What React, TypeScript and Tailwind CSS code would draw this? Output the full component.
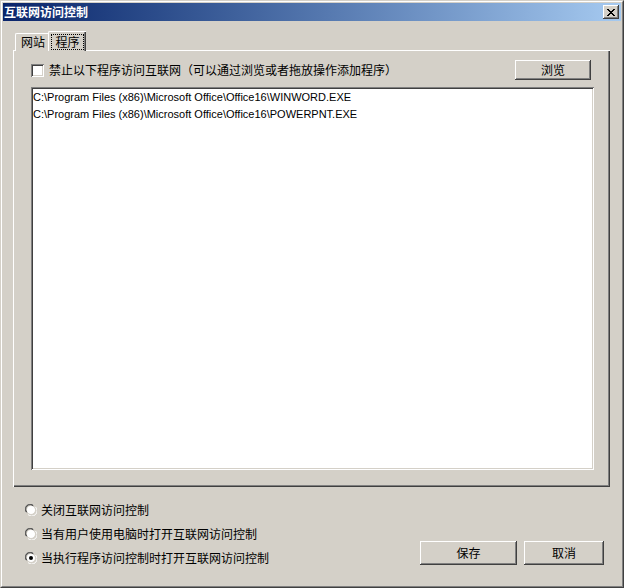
const raised =
  "shadow-[inset_-1px_-1px_#404040,inset_1px_1px_#ffffff,inset_-2px_-2px_#808080]";
const cjk = "font-['SimSun','Noto_Sans_CJK_SC',sans-serif]";

const programs = [
  "C:\\Program Files (x86)\\Microsoft Office\\Office16\\WINWORD.EXE",
  "C:\\Program Files (x86)\\Microsoft Office\\Office16\\POWERPNT.EXE",
];

const modes = [
  "关闭互联网访问控制",
  "当有用户使用电脑时打开互联网访问控制",
  "当执行程序访问控制时打开互联网访问控制",
];

function Radio({ checked }: { checked: boolean }) {
  return (
    <svg width="12" height="12" viewBox="0 0 12 12" className="shrink-0">
      <path d="M1 8 A5 5 0 0 1 8 1" stroke="#808080" fill="none" strokeWidth="1" />
      <path d="M2 8.5 A4.2 4.2 0 0 1 8.5 2" stroke="#404040" fill="none" strokeWidth="1" />
      <circle cx="6" cy="6" r="4" fill="#ffffff" />
      <path d="M3 10.5 A5 5 0 0 0 10.5 3" stroke="#ffffff" fill="none" strokeWidth="1" />
      <path d="M3.2 9.4 A4.2 4.2 0 0 0 9.4 3.2" stroke="#d4d0c8" fill="none" strokeWidth="1" />
      {checked && <circle cx="6" cy="6" r="2" fill="#000000" />}
    </svg>
  );
}

function Button({ label, width }: { label: string; width: string }) {
  return (
    <button
      className={`${width} h-[24px] bg-[#d4d0c8] ${raised} text-[12px] text-black ${cjk} flex items-center justify-center`}
    >
      {label}
    </button>
  );
}

export default function App() {
  return (
    <div className="w-[624px] h-[588px] bg-[#d4d0c8] border border-t-[#d4d0c8] border-l-[#d4d0c8] border-r-[#404040] border-b-[#404040]">
      <div className="h-full border border-t-white border-l-white border-r-[#808080] border-b-[#808080] p-px flex flex-col">
        {/* title bar */}
        <div className="h-[18px] bg-linear-to-r from-[#0a246a] to-[#a6caf0] flex items-center justify-between pl-px pr-[2px]">
          <span className={`text-white font-bold text-[12px] leading-none ${cjk}`}>
            互联网访问控制
          </span>
          <div className={`w-[16px] h-[14px] bg-[#d4d0c8] ${raised} flex items-center justify-center`}>
            <svg width="8" height="7" viewBox="0 0 8 7">
              <path
                d="M0 0h2v1h1v1h2V1h1V0h2v1H7v1H6v1H5v1h1v1h1v1h1v1H6V6H5V5H3v1H2v1H0V6h1V5h1V4h1V3H2V2H1V1H0z"
                fill="#000"
              />
            </svg>
          </div>
        </div>

        {/* tabs + panel */}
        <div className="pl-[10px] pr-[11px] pt-[10px]">
          <div className="flex items-end h-[19px] pl-[2px] relative z-10">
            <div className={`w-[35px] h-[18px] pb-px bg-[#d4d0c8] border-t border-l border-white rounded-tl-[2px] shadow-[inset_-1px_0_#808080] flex items-center justify-center text-[12px] text-black ${cjk} mb-[-1px]`}>
              网站
            </div>
            <div className={`w-[38px] h-[20px] -ml-[2px] bg-[#d4d0c8] border-t border-l border-white rounded-tl-[2px] shadow-[inset_-1px_0_#404040,inset_-2px_0_#808080] flex items-center justify-center text-[12px] text-black ${cjk} mb-[-1px]`}>
              <span className="outline-1 outline-dotted outline-black px-[3px] leading-[14px]">程序</span>
            </div>
          </div>
          <div className="h-[437px] bg-[#d4d0c8] shadow-[inset_1px_1px_#ffffff,inset_-1px_-1px_#404040,inset_-2px_-2px_#808080] pl-[18px] pr-[16px] pt-[10px] flex flex-col">
            <div className="h-[20px] flex items-center justify-between pr-[3px]">
              <div className="flex items-center gap-[5px]">
                <div className="w-[13px] h-[13px] bg-white shadow-[inset_1px_1px_#808080,inset_-1px_-1px_#ffffff,inset_2px_2px_#404040,inset_-2px_-2px_#d4d0c8]" />
                <span className={`text-[12px] text-black ${cjk}`}>
                  禁止以下程序访问互联网（可以通过浏览或者拖放操作添加程序）
                </span>
              </div>
              <button
                className={`w-[76px] h-[20px] bg-[#d4d0c8] ${raised} text-[12px] text-black ${cjk} flex items-center justify-center`}
              >
                浏览
              </button>
            </div>
            <div className="mt-[7px] h-[383px] bg-white shadow-[inset_1px_1px_#808080,inset_-1px_-1px_#ffffff,inset_2px_2px_#404040,inset_-2px_-2px_#d4d0c8] pl-[2px] pt-[2px]">
              {programs.map((p) => (
                <div
                  key={p}
                  className="h-[17px] flex items-center text-[11px] text-black font-['Tahoma','Liberation_Sans',sans-serif]"
                >
                  {p}
                </div>
              ))}
            </div>
          </div>
        </div>

        {/* bottom */}
        <div className="flex-1 flex justify-between pl-[22px] pr-[17px] pt-[11px]">
          <div className="flex flex-col">
            {modes.map((m, i) => (
              <div key={m} className={`${i === 2 ? "h-[23px]" : "h-[24px]"} flex items-center gap-[4px]`}>
                <Radio checked={i === 2} />
                <span className={`text-[12px] text-black ${cjk}`}>{m}</span>
              </div>
            ))}
          </div>
          <div className="flex gap-[7px] pt-[43px]">
            <Button label="保存" width="w-[97px]" />
            <Button label="取消" width="w-[80px]" />
          </div>
        </div>
      </div>
    </div>
  );
}
